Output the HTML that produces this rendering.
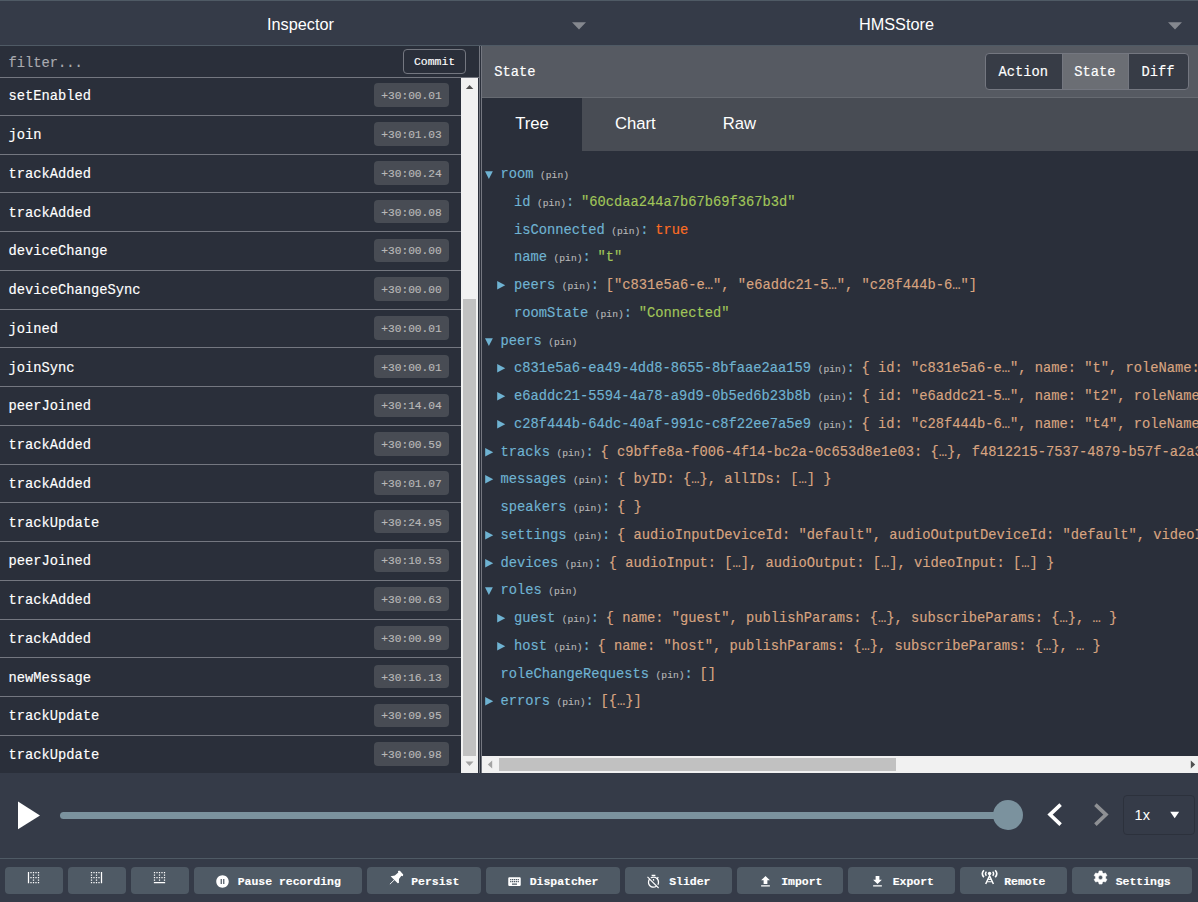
<!DOCTYPE html>
<html><head><meta charset="utf-8"><title>Redux DevTools</title>
<style>
html,body{margin:0;padding:0}
body{width:1198px;height:902px;overflow:hidden;background:#2a2f3a;position:relative}
.b{position:absolute;display:block}
.t{position:absolute;white-space:pre;line-height:20px;height:20px}
.m{font-family:"Liberation Mono",monospace;-webkit-text-stroke:0.15px}
.s{font-family:"Liberation Sans",sans-serif}
</style></head>
<body>
<div class="b" style="left:0px;top:0px;width:1198px;height:46px;background:#353b48;"></div>
<div class="b" style="left:0px;top:0px;width:1198px;height:1px;background:#4f5a65;"></div>
<div class="b" style="left:0px;top:45px;width:1198px;height:1px;background:#4f5a65;"></div>
<div class="t s" style="left:267px;top:14px;font-size:16.25px;color:#fff;">Inspector</div>
<div class="t s" style="left:859px;top:14px;font-size:16.25px;color:#fff;">HMSStore</div>
<svg class="b" style="left:572px;top:22px" width="14" height="8" viewBox="0 0 14 8"><path d="M0 0.3H14L7 7.6Z" fill="#85888f"/></svg>
<svg class="b" style="left:1168px;top:22px" width="14" height="8" viewBox="0 0 14 8"><path d="M0 0.3H14L7 7.6Z" fill="#85888f"/></svg>
<div class="t m" style="left:8.5px;top:54px;font-size:13.75px;color:#a9abb0;">filter...</div>
<div class="b" style="left:0px;top:77px;width:461px;height:1px;background:#747780;"></div>
<div class="b" style="left:461px;top:77px;width:18px;height:1px;background:#747780;"></div>
<div class="b" style="left:403px;top:49px;width:61px;height:23px;border:1px solid #747780;border-radius:4px"></div>
<div class="t m" style="left:414px;top:52px;font-size:11.46px;color:#fff;">Commit</div>
<div class="b" style="left:0px;top:115px;width:461px;height:1px;background:#747780;"></div>
<div class="b" style="left:374px;top:83px;width:74.5px;height:23.5px;background:#484c54;border-radius:4px"></div>
<div class="t m" style="left:8.5px;top:87px;font-size:13.75px;color:#fff;">setEnabled</div>
<div class="t m" style="left:381.3px;top:86px;font-size:11.2px;color:#b8b8b8;">+30:00.01</div>
<div class="b" style="left:0px;top:154px;width:461px;height:1px;background:#747780;"></div>
<div class="b" style="left:374px;top:122.25px;width:74.5px;height:23.5px;background:#484c54;border-radius:4px"></div>
<div class="t m" style="left:8.5px;top:126px;font-size:13.75px;color:#fff;">join</div>
<div class="t m" style="left:381.3px;top:125px;font-size:11.2px;color:#b8b8b8;">+30:01.03</div>
<div class="b" style="left:0px;top:192px;width:461px;height:1px;background:#747780;"></div>
<div class="b" style="left:374px;top:161.0px;width:74.5px;height:23.5px;background:#484c54;border-radius:4px"></div>
<div class="t m" style="left:8.5px;top:165px;font-size:13.75px;color:#fff;">trackAdded</div>
<div class="t m" style="left:381.3px;top:164px;font-size:11.2px;color:#b8b8b8;">+30:00.24</div>
<div class="b" style="left:0px;top:231px;width:461px;height:1px;background:#747780;"></div>
<div class="b" style="left:374px;top:199.75px;width:74.5px;height:23.5px;background:#484c54;border-radius:4px"></div>
<div class="t m" style="left:8.5px;top:204px;font-size:13.75px;color:#fff;">trackAdded</div>
<div class="t m" style="left:381.3px;top:203px;font-size:11.2px;color:#b8b8b8;">+30:00.08</div>
<div class="b" style="left:0px;top:270px;width:461px;height:1px;background:#747780;"></div>
<div class="b" style="left:374px;top:238.5px;width:74.5px;height:23.5px;background:#484c54;border-radius:4px"></div>
<div class="t m" style="left:8.5px;top:242px;font-size:13.75px;color:#fff;">deviceChange</div>
<div class="t m" style="left:381.3px;top:241px;font-size:11.2px;color:#b8b8b8;">+30:00.00</div>
<div class="b" style="left:0px;top:309px;width:461px;height:1px;background:#747780;"></div>
<div class="b" style="left:374px;top:277.25px;width:74.5px;height:23.5px;background:#484c54;border-radius:4px"></div>
<div class="t m" style="left:8.5px;top:281px;font-size:13.75px;color:#fff;">deviceChangeSync</div>
<div class="t m" style="left:381.3px;top:280px;font-size:11.2px;color:#b8b8b8;">+30:00.00</div>
<div class="b" style="left:0px;top:347px;width:461px;height:1px;background:#747780;"></div>
<div class="b" style="left:374px;top:316.0px;width:74.5px;height:23.5px;background:#484c54;border-radius:4px"></div>
<div class="t m" style="left:8.5px;top:320px;font-size:13.75px;color:#fff;">joined</div>
<div class="t m" style="left:381.3px;top:319px;font-size:11.2px;color:#b8b8b8;">+30:00.01</div>
<div class="b" style="left:0px;top:386px;width:461px;height:1px;background:#747780;"></div>
<div class="b" style="left:374px;top:354.75px;width:74.5px;height:23.5px;background:#484c54;border-radius:4px"></div>
<div class="t m" style="left:8.5px;top:359px;font-size:13.75px;color:#fff;">joinSync</div>
<div class="t m" style="left:381.3px;top:358px;font-size:11.2px;color:#b8b8b8;">+30:00.01</div>
<div class="b" style="left:0px;top:425px;width:461px;height:1px;background:#747780;"></div>
<div class="b" style="left:374px;top:393.5px;width:74.5px;height:23.5px;background:#484c54;border-radius:4px"></div>
<div class="t m" style="left:8.5px;top:397px;font-size:13.75px;color:#fff;">peerJoined</div>
<div class="t m" style="left:381.3px;top:396px;font-size:11.2px;color:#b8b8b8;">+30:14.04</div>
<div class="b" style="left:0px;top:464px;width:461px;height:1px;background:#747780;"></div>
<div class="b" style="left:374px;top:432.25px;width:74.5px;height:23.5px;background:#484c54;border-radius:4px"></div>
<div class="t m" style="left:8.5px;top:436px;font-size:13.75px;color:#fff;">trackAdded</div>
<div class="t m" style="left:381.3px;top:435px;font-size:11.2px;color:#b8b8b8;">+30:00.59</div>
<div class="b" style="left:0px;top:502px;width:461px;height:1px;background:#747780;"></div>
<div class="b" style="left:374px;top:471.0px;width:74.5px;height:23.5px;background:#484c54;border-radius:4px"></div>
<div class="t m" style="left:8.5px;top:475px;font-size:13.75px;color:#fff;">trackAdded</div>
<div class="t m" style="left:381.3px;top:474px;font-size:11.2px;color:#b8b8b8;">+30:01.07</div>
<div class="b" style="left:0px;top:541px;width:461px;height:1px;background:#747780;"></div>
<div class="b" style="left:374px;top:509.75px;width:74.5px;height:23.5px;background:#484c54;border-radius:4px"></div>
<div class="t m" style="left:8.5px;top:514px;font-size:13.75px;color:#fff;">trackUpdate</div>
<div class="t m" style="left:381.3px;top:513px;font-size:11.2px;color:#b8b8b8;">+30:24.95</div>
<div class="b" style="left:0px;top:580px;width:461px;height:1px;background:#747780;"></div>
<div class="b" style="left:374px;top:548.5px;width:74.5px;height:23.5px;background:#484c54;border-radius:4px"></div>
<div class="t m" style="left:8.5px;top:552px;font-size:13.75px;color:#fff;">peerJoined</div>
<div class="t m" style="left:381.3px;top:551px;font-size:11.2px;color:#b8b8b8;">+30:10.53</div>
<div class="b" style="left:0px;top:619px;width:461px;height:1px;background:#747780;"></div>
<div class="b" style="left:374px;top:587.25px;width:74.5px;height:23.5px;background:#484c54;border-radius:4px"></div>
<div class="t m" style="left:8.5px;top:591px;font-size:13.75px;color:#fff;">trackAdded</div>
<div class="t m" style="left:381.3px;top:590px;font-size:11.2px;color:#b8b8b8;">+30:00.63</div>
<div class="b" style="left:0px;top:657px;width:461px;height:1px;background:#747780;"></div>
<div class="b" style="left:374px;top:626.0px;width:74.5px;height:23.5px;background:#484c54;border-radius:4px"></div>
<div class="t m" style="left:8.5px;top:630px;font-size:13.75px;color:#fff;">trackAdded</div>
<div class="t m" style="left:381.3px;top:629px;font-size:11.2px;color:#b8b8b8;">+30:00.99</div>
<div class="b" style="left:0px;top:696px;width:461px;height:1px;background:#747780;"></div>
<div class="b" style="left:374px;top:664.75px;width:74.5px;height:23.5px;background:#484c54;border-radius:4px"></div>
<div class="t m" style="left:8.5px;top:669px;font-size:13.75px;color:#fff;">newMessage</div>
<div class="t m" style="left:381.3px;top:668px;font-size:11.2px;color:#b8b8b8;">+30:16.13</div>
<div class="b" style="left:0px;top:735px;width:461px;height:1px;background:#747780;"></div>
<div class="b" style="left:374px;top:703.5px;width:74.5px;height:23.5px;background:#484c54;border-radius:4px"></div>
<div class="t m" style="left:8.5px;top:707px;font-size:13.75px;color:#fff;">trackUpdate</div>
<div class="t m" style="left:381.3px;top:706px;font-size:11.2px;color:#b8b8b8;">+30:09.95</div>
<div class="b" style="left:374px;top:742.25px;width:74.5px;height:23.5px;background:#484c54;border-radius:4px"></div>
<div class="t m" style="left:8.5px;top:746px;font-size:13.75px;color:#fff;">trackUpdate</div>
<div class="t m" style="left:381.3px;top:745px;font-size:11.2px;color:#b8b8b8;">+30:00.98</div>
<div class="b" style="left:461px;top:78px;width:17px;height:695px;background:#f1f1f1;"></div>
<div class="b" style="left:463px;top:299px;width:13px;height:457px;background:#c1c1c1;"></div>
<svg class="b" style="left:461px;top:78px" width="17" height="17" viewBox="0 0 17 17"><path d="M4.9 11.1L8.6 7.1L12.3 11.1Z" fill="#505050"/></svg>
<svg class="b" style="left:461px;top:756px" width="17" height="17" viewBox="0 0 17 17"><path d="M4.5 5.5L8.5 10L12.5 5.5Z" fill="#a3a3a3"/></svg>
<div class="b" style="left:479px;top:46px;width:1px;height:727px;background:#747780;"></div>
<div class="b" style="left:481px;top:46px;width:1px;height:727px;background:#747780;"></div>
<div class="b" style="left:482px;top:46px;width:716px;height:52px;background:#565a62;"></div>
<div class="b" style="left:482px;top:97px;width:716px;height:1px;background:#666a71;"></div>
<div class="t m" style="left:494.3px;top:63px;font-size:13.75px;color:#fff;">State</div>
<div class="b" style="left:985px;top:53px;width:202px;height:35px;border:1px solid #747780;border-radius:4px;background:#373c46;overflow:hidden"><div class="b" style="left:76px;top:0;width:67px;height:35px;background:#6b6e74;border-left:1px solid #747780;border-right:1px solid #747780;box-sizing:border-box"></div></div>
<div class="t m" style="left:998.4px;top:63px;font-size:13.75px;color:#fff;">Action</div>
<div class="t m" style="left:1074.3px;top:63px;font-size:13.75px;color:#fff;">State</div>
<div class="t m" style="left:1141.4px;top:63px;font-size:13.75px;color:#fff;">Diff</div>
<div class="b" style="left:482px;top:98px;width:716px;height:53px;background:#484c54;"></div>
<div class="b" style="left:482px;top:98px;width:100px;height:53px;background:#2a2f3a;"></div>
<div class="t s" style="left:515.2px;top:114px;font-size:16.67px;color:#fff;">Tree</div>
<div class="t s" style="left:615px;top:114px;font-size:16.67px;color:#fff;">Chart</div>
<div class="t s" style="left:722.8px;top:114px;font-size:16.67px;color:#fff;">Raw</div>
<div class="b" style="left:482px;top:151px;width:716px;height:605px;overflow:hidden">
<svg class="b" style="left:2.7px;top:20px" width="9" height="9" viewBox="0 0 9 9"><path d="M0 0.2H7.8L3.9 8.1Z" fill="#6fb3d2"/></svg>
<div class="t m" style="left:18.5px;top:14px;font-size:13.75px"><span style="color:#6fb3d2">room</span><span style="color:#b6b6b6;font-size:9.625px;margin-left:0.8px"> (pin)</span></div>
<div class="t m" style="left:32px;top:42px;font-size:13.75px"><span style="color:#6fb3d2">id</span><span style="color:#b6b6b6;font-size:9.625px;margin-left:0.8px"> (pin)</span><span style="color:#6fb3d2">:</span><span style="color:#a1c659;margin-left:6.7px">"60cdaa244a7b67b69f367b3d"</span></div>
<div class="t m" style="left:32px;top:70px;font-size:13.75px"><span style="color:#6fb3d2">isConnected</span><span style="color:#b6b6b6;font-size:9.625px;margin-left:0.8px"> (pin)</span><span style="color:#6fb3d2">:</span><span style="color:#fc6d24;margin-left:6.7px">true</span></div>
<div class="t m" style="left:32px;top:97px;font-size:13.75px"><span style="color:#6fb3d2">name</span><span style="color:#b6b6b6;font-size:9.625px;margin-left:0.8px"> (pin)</span><span style="color:#6fb3d2">:</span><span style="color:#a1c659;margin-left:6.7px">"t"</span></div>
<svg class="b" style="left:15.3px;top:129.6px" width="9" height="9" viewBox="0 0 9 9"><path d="M0.2 0V8.4L8.2 4.2Z" fill="#6fb3d2"/></svg>
<div class="t m" style="left:32px;top:125px;font-size:13.75px"><span style="color:#6fb3d2">peers</span><span style="color:#b6b6b6;font-size:9.625px;margin-left:0.8px"> (pin)</span><span style="color:#6fb3d2">:</span><span style="color:#d8a480;margin-left:6.7px">["c831e5a6-e…", "e6addc21-5…", "c28f444b-6…"]</span></div>
<div class="t m" style="left:32px;top:153px;font-size:13.75px"><span style="color:#6fb3d2">roomState</span><span style="color:#b6b6b6;font-size:9.625px;margin-left:0.8px"> (pin)</span><span style="color:#6fb3d2">:</span><span style="color:#a1c659;margin-left:6.7px">"Connected"</span></div>
<svg class="b" style="left:2.7px;top:187px" width="9" height="9" viewBox="0 0 9 9"><path d="M0 0.2H7.8L3.9 8.1Z" fill="#6fb3d2"/></svg>
<div class="t m" style="left:18.5px;top:181px;font-size:13.75px"><span style="color:#6fb3d2">peers</span><span style="color:#b6b6b6;font-size:9.625px;margin-left:0.8px"> (pin)</span></div>
<svg class="b" style="left:15.3px;top:212.6px" width="9" height="9" viewBox="0 0 9 9"><path d="M0.2 0V8.4L8.2 4.2Z" fill="#6fb3d2"/></svg>
<div class="t m" style="left:32px;top:208px;font-size:13.75px"><span style="color:#6fb3d2">c831e5a6-ea49-4dd8-8655-8bfaae2aa159</span><span style="color:#b6b6b6;font-size:9.625px;margin-left:0.8px"> (pin)</span><span style="color:#6fb3d2">:</span><span style="color:#d8a480;margin-left:6.7px">{ id: "c831e5a6-e…", name: "t", roleName: "host", isLocal: false }</span></div>
<svg class="b" style="left:15.3px;top:240.6px" width="9" height="9" viewBox="0 0 9 9"><path d="M0.2 0V8.4L8.2 4.2Z" fill="#6fb3d2"/></svg>
<div class="t m" style="left:32px;top:236px;font-size:13.75px"><span style="color:#6fb3d2">e6addc21-5594-4a78-a9d9-0b5ed6b23b8b</span><span style="color:#b6b6b6;font-size:9.625px;margin-left:0.8px"> (pin)</span><span style="color:#6fb3d2">:</span><span style="color:#d8a480;margin-left:6.7px">{ id: "e6addc21-5…", name: "t2", roleName: "host", isLocal: false }</span></div>
<svg class="b" style="left:15.3px;top:268.6px" width="9" height="9" viewBox="0 0 9 9"><path d="M0.2 0V8.4L8.2 4.2Z" fill="#6fb3d2"/></svg>
<div class="t m" style="left:32px;top:264px;font-size:13.75px"><span style="color:#6fb3d2">c28f444b-64dc-40af-991c-c8f22ee7a5e9</span><span style="color:#b6b6b6;font-size:9.625px;margin-left:0.8px"> (pin)</span><span style="color:#6fb3d2">:</span><span style="color:#d8a480;margin-left:6.7px">{ id: "c28f444b-6…", name: "t4", roleName: "guest", isLocal: true }</span></div>
<svg class="b" style="left:2.9px;top:296.6px" width="9" height="9" viewBox="0 0 9 9"><path d="M0.2 0V8.4L8.2 4.2Z" fill="#6fb3d2"/></svg>
<div class="t m" style="left:18.5px;top:292px;font-size:13.75px"><span style="color:#6fb3d2">tracks</span><span style="color:#b6b6b6;font-size:9.625px;margin-left:0.8px"> (pin)</span><span style="color:#6fb3d2">:</span><span style="color:#d8a480;margin-left:6.7px">{ c9bffe8a-f006-4f14-bc2a-0c653d8e1e03: {…}, f4812215-7537-4879-b57f-a2a3c1e8d0f4: {…}, … }</span></div>
<svg class="b" style="left:2.9px;top:323.6px" width="9" height="9" viewBox="0 0 9 9"><path d="M0.2 0V8.4L8.2 4.2Z" fill="#6fb3d2"/></svg>
<div class="t m" style="left:18.5px;top:319px;font-size:13.75px"><span style="color:#6fb3d2">messages</span><span style="color:#b6b6b6;font-size:9.625px;margin-left:0.8px"> (pin)</span><span style="color:#6fb3d2">:</span><span style="color:#d8a480;margin-left:6.7px">{ byID: {…}, allIDs: […] }</span></div>
<div class="t m" style="left:18.5px;top:347px;font-size:13.75px"><span style="color:#6fb3d2">speakers</span><span style="color:#b6b6b6;font-size:9.625px;margin-left:0.8px"> (pin)</span><span style="color:#6fb3d2">:</span><span style="color:#d8a480;margin-left:6.7px">{ }</span></div>
<svg class="b" style="left:2.9px;top:379.6px" width="9" height="9" viewBox="0 0 9 9"><path d="M0.2 0V8.4L8.2 4.2Z" fill="#6fb3d2"/></svg>
<div class="t m" style="left:18.5px;top:375px;font-size:13.75px"><span style="color:#6fb3d2">settings</span><span style="color:#b6b6b6;font-size:9.625px;margin-left:0.8px"> (pin)</span><span style="color:#6fb3d2">:</span><span style="color:#d8a480;margin-left:6.7px">{ audioInputDeviceId: "default", audioOutputDeviceId: "default", videoInputDeviceId: "default" }</span></div>
<svg class="b" style="left:2.9px;top:407.6px" width="9" height="9" viewBox="0 0 9 9"><path d="M0.2 0V8.4L8.2 4.2Z" fill="#6fb3d2"/></svg>
<div class="t m" style="left:18.5px;top:403px;font-size:13.75px"><span style="color:#6fb3d2">devices</span><span style="color:#b6b6b6;font-size:9.625px;margin-left:0.8px"> (pin)</span><span style="color:#6fb3d2">:</span><span style="color:#d8a480;margin-left:6.7px">{ audioInput: […], audioOutput: […], videoInput: […] }</span></div>
<svg class="b" style="left:2.7px;top:436px" width="9" height="9" viewBox="0 0 9 9"><path d="M0 0.2H7.8L3.9 8.1Z" fill="#6fb3d2"/></svg>
<div class="t m" style="left:18.5px;top:430px;font-size:13.75px"><span style="color:#6fb3d2">roles</span><span style="color:#b6b6b6;font-size:9.625px;margin-left:0.8px"> (pin)</span></div>
<svg class="b" style="left:15.3px;top:462.6px" width="9" height="9" viewBox="0 0 9 9"><path d="M0.2 0V8.4L8.2 4.2Z" fill="#6fb3d2"/></svg>
<div class="t m" style="left:32px;top:458px;font-size:13.75px"><span style="color:#6fb3d2">guest</span><span style="color:#b6b6b6;font-size:9.625px;margin-left:0.8px"> (pin)</span><span style="color:#6fb3d2">:</span><span style="color:#d8a480;margin-left:6.7px">{ name: "guest", publishParams: {…}, subscribeParams: {…}, … }</span></div>
<svg class="b" style="left:15.3px;top:490.6px" width="9" height="9" viewBox="0 0 9 9"><path d="M0.2 0V8.4L8.2 4.2Z" fill="#6fb3d2"/></svg>
<div class="t m" style="left:32px;top:486px;font-size:13.75px"><span style="color:#6fb3d2">host</span><span style="color:#b6b6b6;font-size:9.625px;margin-left:0.8px"> (pin)</span><span style="color:#6fb3d2">:</span><span style="color:#d8a480;margin-left:6.7px">{ name: "host", publishParams: {…}, subscribeParams: {…}, … }</span></div>
<div class="t m" style="left:18.5px;top:514px;font-size:13.75px"><span style="color:#6fb3d2">roleChangeRequests</span><span style="color:#b6b6b6;font-size:9.625px;margin-left:0.8px"> (pin)</span><span style="color:#6fb3d2">:</span><span style="color:#d8a480;margin-left:6.7px">[]</span></div>
<svg class="b" style="left:2.9px;top:545.6px" width="9" height="9" viewBox="0 0 9 9"><path d="M0.2 0V8.4L8.2 4.2Z" fill="#6fb3d2"/></svg>
<div class="t m" style="left:18.5px;top:541px;font-size:13.75px"><span style="color:#6fb3d2">errors</span><span style="color:#b6b6b6;font-size:9.625px;margin-left:0.8px"> (pin)</span><span style="color:#6fb3d2">:</span><span style="color:#d8a480;margin-left:6.7px">[{…}]</span></div>
</div>
<div class="b" style="left:482px;top:756px;width:716px;height:17px;background:#f1f1f1;"></div>
<div class="b" style="left:499px;top:758px;width:397px;height:13px;background:#c1c1c1;"></div>
<svg class="b" style="left:482px;top:756px" width="17" height="17" viewBox="0 0 17 17"><path d="M10.2 4.5L5.8 8.5L10.2 12.5Z" fill="#a3a3a3"/></svg>
<svg class="b" style="left:1181px;top:756px" width="17" height="17" viewBox="0 0 17 17"><path d="M9.8 4.5L14.2 8.5L9.8 12.5Z" fill="#505050"/></svg>
<div class="b" style="left:0px;top:773px;width:1198px;height:86px;background:#353b48;"></div>
<div class="b" style="left:0px;top:858px;width:1198px;height:1px;background:#4f5a65;"></div>
<svg class="b" style="left:18px;top:801px" width="23" height="29" viewBox="0 0 23 29"><path d="M0 0.6L22 14.4L0 28.2Z" fill="#fff"/></svg>
<div class="b" style="left:59.5px;top:811.7px;width:950px;height:7.5px;background:#7b929e;border-radius:3.75px"></div>
<div class="b" style="left:993px;top:800px;width:30px;height:30px;border-radius:15px;background:#7b929e"></div>
<svg class="b" style="left:1044px;top:800px" width="24" height="30" viewBox="0 0 24 30"><path d="M16.6 4.6L6 14.6L16.6 24.6" fill="none" stroke="#fff" stroke-width="3.6"/></svg>
<svg class="b" style="left:1088px;top:800px" width="24" height="30" viewBox="0 0 24 30"><path d="M7.4 4.6L18 14.6L7.4 24.6" fill="none" stroke="#8e9094" stroke-width="3.6"/></svg>
<div class="b" style="left:1123px;top:795px;width:70px;height:38px;border:1px solid #2c313c;border-radius:4px"></div>
<div class="t s" style="left:1134.6px;top:805px;font-size:14.5px;color:#fff;">1x</div>
<svg class="b" style="left:1170px;top:811px" width="10" height="8" viewBox="0 0 10 8"><path d="M0.2 0.7H9.2L4.7 7.3Z" fill="#fff"/></svg>
<div class="b" style="left:0px;top:859px;width:1198px;height:43px;background:#353b48;"></div>
<div class="b" style="left:5px;top:867px;width:58px;height:27px;background:#4f5a65;border-radius:4px"></div>
<div class="b" style="left:68px;top:867px;width:58px;height:27px;background:#4f5a65;border-radius:4px"></div>
<div class="b" style="left:131px;top:867px;width:58px;height:27px;background:#4f5a65;border-radius:4px"></div>
<div class="b" style="left:194px;top:867px;width:168px;height:27px;background:#4f5a65;border-radius:4px"></div>
<div class="t m" style="left:237.7px;top:872px;font-size:11.46px;color:#fff;font-weight:bold;">Pause recording</div>
<div class="b" style="left:367px;top:867px;width:114px;height:27px;background:#4f5a65;border-radius:4px"></div>
<div class="t m" style="left:411.2px;top:872px;font-size:11.46px;color:#fff;font-weight:bold;">Persist</div>
<div class="b" style="left:486.3px;top:867px;width:133.4px;height:27px;background:#4f5a65;border-radius:4px"></div>
<div class="t m" style="left:529.7px;top:872px;font-size:11.46px;color:#fff;font-weight:bold;">Dispatcher</div>
<div class="b" style="left:625px;top:867px;width:106.7px;height:27px;background:#4f5a65;border-radius:4px"></div>
<div class="t m" style="left:669.2px;top:872px;font-size:11.46px;color:#fff;font-weight:bold;">Slider</div>
<div class="b" style="left:737px;top:867px;width:106px;height:27px;background:#4f5a65;border-radius:4px"></div>
<div class="t m" style="left:781.2px;top:872px;font-size:11.46px;color:#fff;font-weight:bold;">Import</div>
<div class="b" style="left:848px;top:867px;width:106.6px;height:27px;background:#4f5a65;border-radius:4px"></div>
<div class="t m" style="left:892.7px;top:872px;font-size:11.46px;color:#fff;font-weight:bold;">Export</div>
<div class="b" style="left:960px;top:867px;width:107px;height:27px;background:#4f5a65;border-radius:4px"></div>
<div class="t m" style="left:1004.2px;top:872px;font-size:11.46px;color:#fff;font-weight:bold;">Remote</div>
<div class="b" style="left:1072px;top:867px;width:120px;height:27px;background:#4f5a65;border-radius:4px"></div>
<div class="t m" style="left:1115.7px;top:872px;font-size:11.46px;color:#fff;font-weight:bold;">Settings</div>
<svg class="b" style="left:25.9px;top:870.0px" width="15" height="15" viewBox="0 0 24 24"><path fill="#fff" d="M3 3h2v18H3zM7 3h2v2h-2zM11 3h2v2h-2zM15 3h2v2h-2zM19 3h2v2h-2zM7 11h2v2h-2zM11 11h2v2h-2zM15 11h2v2h-2zM19 11h2v2h-2zM7 19h2v2h-2zM11 19h2v2h-2zM15 19h2v2h-2zM19 19h2v2h-2zM11 7h2v2h-2zM19 7h2v2h-2zM11 15h2v2h-2zM19 15h2v2h-2z"/></svg>
<svg class="b" style="left:89.2px;top:870.0px" width="15" height="15" viewBox="0 0 24 24"><path fill="#fff" d="M19 3h2v18h-2zM3 3h2v2h-2zM7 3h2v2h-2zM11 3h2v2h-2zM15 3h2v2h-2zM3 11h2v2h-2zM7 11h2v2h-2zM11 11h2v2h-2zM15 11h2v2h-2zM3 19h2v2h-2zM7 19h2v2h-2zM11 19h2v2h-2zM15 19h2v2h-2zM3 7h2v2h-2zM11 7h2v2h-2zM3 15h2v2h-2zM11 15h2v2h-2z"/></svg>
<svg class="b" style="left:151.5px;top:870.0px" width="15" height="15" viewBox="0 0 24 24"><path fill="#fff" d="M3 19h18v2H3zM3 3h2v2h-2zM7 3h2v2h-2zM11 3h2v2h-2zM15 3h2v2h-2zM19 3h2v2h-2zM3 11h2v2h-2zM7 11h2v2h-2zM11 11h2v2h-2zM15 11h2v2h-2zM19 11h2v2h-2zM3 7h2v2h-2zM11 7h2v2h-2zM19 7h2v2h-2zM3 15h2v2h-2zM11 15h2v2h-2zM19 15h2v2h-2z"/></svg>
<svg class="b" style="left:215.06px;top:873.86px" width="15" height="15" viewBox="0 0 24 24"><path fill="#fff" d="M12 2C6.48 2 2 6.48 2 12s4.48 10 10 10 10-4.48 10-10S17.52 2 12 2zm-1 14H9V8h2v8zm4 0h-2V8h2v8z"/></svg>
<svg class="b" style="left:386px;top:868px" width="20" height="18" viewBox="0 0 20 18"><polygon fill="#fff" points="4.6,8.2 8.8,7.5 12.3,4.6 11.9,3.2 12.6,2.7 13.9,2.8 17.2,6.6 17.0,7.8 16.2,8.2 15.4,7.7 13.0,10.9 12.9,14.9 11.7,15.3"/><path d="M8.6 11.6L4.2 15.9" stroke="#fff" stroke-width="0.9" stroke-linecap="round"/></svg>
<svg class="b" style="left:507.06px;top:874.1px" width="15" height="15" viewBox="0 0 24 24"><path fill="#fff" d="M20 5H4c-1.1 0-1.99.9-1.99 2L2 17c0 1.1.9 2 2 2h16c1.1 0 2-.9 2-2V7c0-1.1-.9-2-2-2zm-9 3h2v2h-2V8zm0 3h2v2h-2v-2zM8 8h2v2H8V8zm0 3h2v2H8v-2zm-1 2H5v-2h2v2zm0-3H5V8h2v2zm9 7H8v-2h8v2zm0-4h-2v-2h2v2zm0-3h-2V8h2v2zm3 3h-2v-2h2v2zm0-3h-2V8h2v2z"/></svg>
<svg class="b" style="left:646.1px;top:873.9px" width="15" height="15" viewBox="0 0 24 24"><path fill="#fff" d="M19.04 4.55l-1.42 1.42C16.07 4.74 14.12 4 12 4c-1.83 0-3.53.55-4.95 1.48l1.46 1.46C9.53 6.35 10.73 6 12 6c3.87 0 7 3.13 7 7 0 1.27-.35 2.47-.94 3.49l1.45 1.45C20.45 16.53 21 14.83 21 13c0-2.12-.74-4.07-1.97-5.61l1.42-1.42-1.41-1.42zM15 1H9v2h6V1zm-4 8.44l2 2V8h-2v1.44zM3.02 4L1.75 5.27 4.5 8.03C3.55 9.45 3 11.16 3 13c0 4.97 4.02 9 9 9 1.84 0 3.55-.55 4.98-1.5l2.5 2.5 1.27-1.27-7.71-7.71L3.02 4zM12 20c-3.87 0-7-3.13-7-7 0-1.28.35-2.48.95-3.52l9.56 9.56c-1.03.61-2.23.96-3.51.96z"/></svg>
<svg class="b" style="left:758px;top:874.2px" width="15" height="15" viewBox="0 0 24 24"><path fill="#fff" d="M9 16h6v-6h4l-7-7-7 7h4zm-4 2h14v2H5z"/></svg>
<svg class="b" style="left:870.15px;top:874.2px" width="15" height="15" viewBox="0 0 24 24"><path fill="#fff" d="M19 9h-4V3H9v6H5l7 7 7-7zM5 18v2h14v-2H5z"/></svg>
<svg class="b" style="left:979px;top:868px" width="22" height="18" viewBox="0 0 22 18"><circle cx="10.56" cy="5.60" r="1.75" fill="#fff"/><g fill="none" stroke="#fff" stroke-linecap="butt"><path stroke-width="1.4" d="M7.40 3.60Q5.50 5.70 7.40 7.80M13.70 3.60Q15.60 5.70 13.70 7.80"/><path stroke-width="1.6" d="M4.90 2.30Q1.70 5.70 4.90 9.20M16.20 2.30Q19.40 5.70 16.20 9.20"/><path stroke-width="1.5" stroke-linecap="butt" d="M6.70 16.00L10.56 7.80L14.40 16.00"/><path stroke-width="1.1" stroke-linecap="butt" d="M8.20 13.70H12.90M9.20 11.40H11.90"/></g></svg>
<svg class="b" style="left:1092px;top:869px" width="18" height="18" viewBox="0 0 18 18"><path fill="#fff" fill-rule="evenodd" stroke="#fff" stroke-width="0.6" stroke-linejoin="round" d="M10.34 3.83L10.06 1.97L7.04 1.97L6.76 3.83L5.40 4.61L3.65 3.93L2.14 6.54L3.61 7.72L3.61 9.28L2.14 10.46L3.65 13.07L5.40 12.39L6.76 13.17L7.04 15.03L10.06 15.03L10.34 13.17L11.70 12.39L13.45 13.07L14.96 10.46L13.49 9.28L13.49 7.72L14.96 6.54L13.45 3.93L11.70 4.61ZM6.35 8.50a2.2 2.2 0 1 0 4.4 0a2.2 2.2 0 1 0 -4.4 0Z"/></svg>
</body></html>
